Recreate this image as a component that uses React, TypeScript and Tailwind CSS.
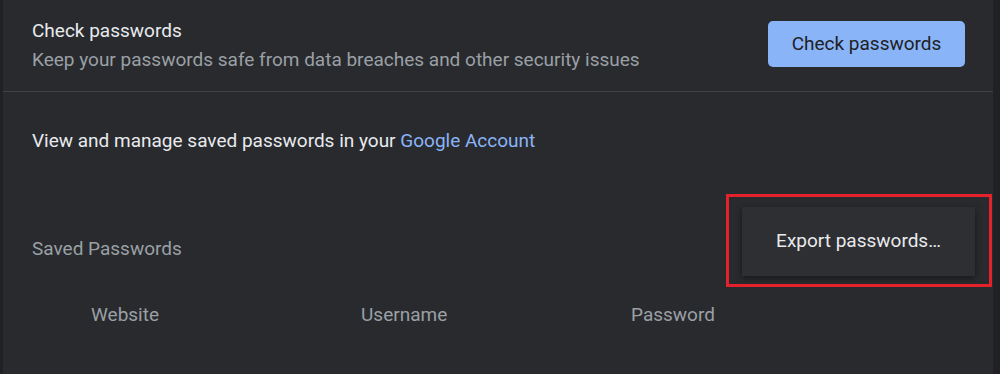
export default function App() {
  return (
    <div className="w-[1000px] h-[374px] bg-[#202124] flex overflow-hidden font-['Roboto',sans-serif]">
      <div className="ml-[3px] w-[990px] h-full bg-[#292a2d] flex flex-col">
        {/* Check passwords row */}
        <div className="h-[91px] flex items-center justify-between pl-[29px] pr-[28px] pb-[2px]">
          <div className="flex flex-col">
            <span className="text-[19px] leading-[23px] text-[#e8eaed]">Check passwords</span>
            <span className="text-[19px] leading-[23px] text-[#9aa0a6] mt-[6px]">
              Keep your passwords safe from data breaches and other security issues
            </span>
          </div>
          <button className="w-[197px] h-[46px] mb-[1px] rounded-[5px] bg-[#8ab4f8] text-[#202124] text-[19px]">
            Check passwords
          </button>
        </div>
        <div className="h-px bg-[#3f4043]" />

        {/* Google Account row */}
        <div className="h-[97px] flex items-center pl-[29px] pt-[1px]">
          <span className="text-[19px] text-[#e8eaed]">
            View and manage saved passwords in your{" "}
            <span className="text-[#8ab4f8]">Google Account</span>
          </span>
        </div>

        {/* Saved passwords header */}
        <div className="flex items-start justify-between pl-[29px] pr-px pt-[5px]">
          <span className="mt-[41px] text-[19px] text-[#9aa0a6]">Saved Passwords</span>
          <div className="border-[3px] border-[#e5222b] pt-[10px] pb-[8px] pl-[13px] pr-[14px]">
            <button className="w-[233px] h-[69px] bg-[#2e2f32] text-[#e8eaed] text-[19px] shadow-[0_2px_6px_rgba(0,0,0,0.45)]">
              Export passwords…
            </button>
          </div>
        </div>

        {/* Column headings */}
        <div className="flex items-center pl-[88px] h-[56px] text-[19px] text-[#9aa0a6]">
          <span className="w-[270px]">Website</span>
          <span className="w-[270px]">Username</span>
          <span>Password</span>
        </div>
      </div>
    </div>
  );
}
